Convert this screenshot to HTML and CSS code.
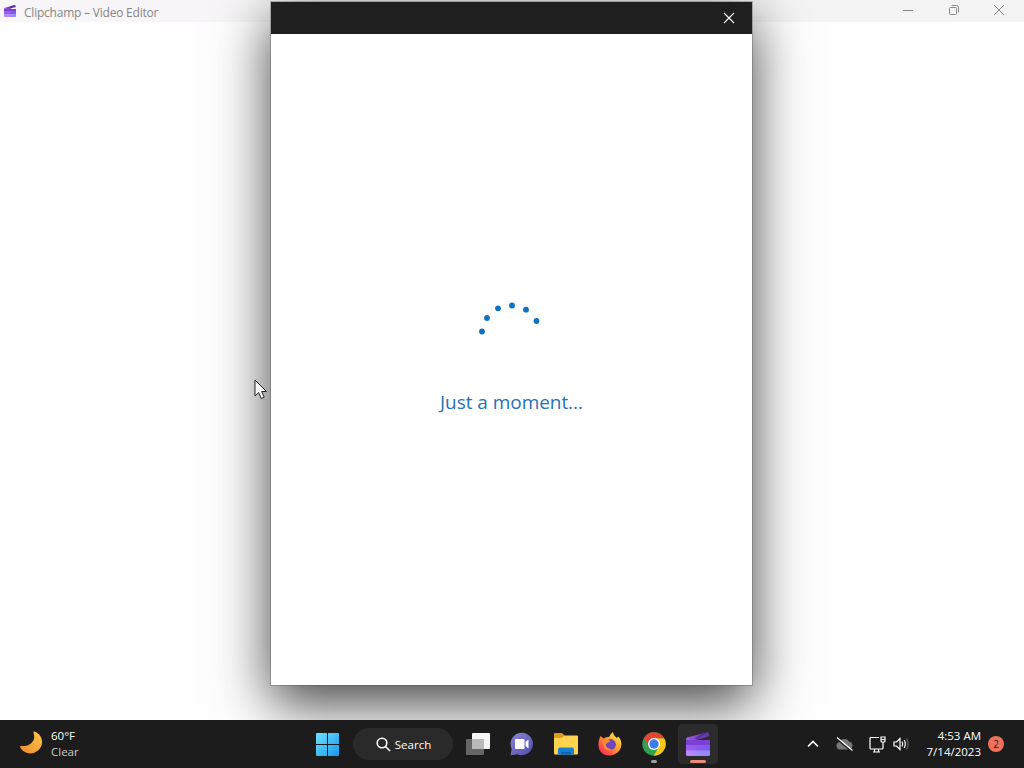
FILE: index.html
```html
<!DOCTYPE html>
<html lang="en">
<head>
    <meta charset="UTF-8">
    <meta name="viewport" content="width=device-width, initial-scale=1.0">
    <title>Clipchamp – Video Editor</title>
    <link rel="stylesheet" href="styles.css">
</head>
<body>
    <svg class="defs" width="0" height="0">
        <defs>
            <linearGradient id="clipTop" x1="0" y1="0" x2="1" y2="0">
                <stop offset="0" stop-color="#a45be6"/>
                <stop offset="1" stop-color="#5836a4"/>
            </linearGradient>
            <linearGradient id="clipMid" x1="0" y1="0" x2="1" y2="0">
                <stop offset="0" stop-color="#a35bef"/>
                <stop offset="1" stop-color="#7659ef"/>
            </linearGradient>
            <linearGradient id="clipLow" x1="0" y1="0" x2="1" y2="0">
                <stop offset="0" stop-color="#b98bfb"/>
                <stop offset="1" stop-color="#8f86fb"/>
            </linearGradient>
            <symbol id="clipchamp" viewBox="0 0 24 24">
                <path fill="url(#clipTop)" d="M0 7.500Q0 5.700 1.700 5.300L21.500 .2Q22.700 0 23 1.200L23.500 4 9 8.500H0z"/>
                <path fill="#4b2a94" d="M8 6.500L16 1.700 21 .4 12.500 7.200z" opacity=".7"/>
                <path fill="#7b3fd2" d="M0 8H24V13.500H0z"/>
                <path fill="url(#clipMid)" d="M0 13H24V19H0z"/>
                <path fill="url(#clipLow)" d="M0 18.500H24V22.500Q24 24 22.500 24H1.500Q0 24 0 22.500z"/>
            </symbol>
        </defs>
    </svg>

    <header class="titlebar">
        <svg class="app-icon" width="12" height="12"><use href="#clipchamp"/></svg>
        <span class="app-title">Clipchamp – Video Editor</span>
        <div class="window-buttons">
            <svg width="12" height="12" viewBox="0 0 12 12"><path d="M1 6.500H11"/></svg>
            <svg width="12" height="12" viewBox="0 0 12 12"><rect x="1.500" y="3.500" width="7" height="7" rx="1"/><path d="M3.500 1.500H8.500Q10.500 1.500 10.500 3.500V8.500"/></svg>
            <svg width="12" height="12" viewBox="0 0 12 12"><path d="M1 1L11 11M11 1L1 11"/></svg>
        </div>
    </header>

    <main class="workspace">
        <section class="dialog">
            <div class="dialog-bar">
                <svg width="12" height="12" viewBox="0 0 12 12"><path d="M1 1L11 11M11 1L1 11"/></svg>
            </div>
            <div class="dialog-body">
                <svg class="spinner" width="67" height="34" viewBox="0 0 67 34">
                    <circle cx="4" cy="30.500" r="2.900"/>
                    <circle cx="9" cy="17" r="2.900"/>
                    <circle cx="20" cy="7.300" r="2.900"/>
                    <circle cx="34" cy="4.500" r="2.900"/>
                    <circle cx="48" cy="8.700" r="2.900"/>
                    <circle cx="58.500" cy="20" r="2.900"/>
                </svg>
                <p class="message">Just a moment...</p>
            </div>
        </section>
        <svg class="cursor" width="14" height="21" viewBox="0 0 14 21">
            <path d="M1 1V17L4.700 13.500 7.300 19.500 10.200 18.200 7.600 12.500H12.500z"/>
        </svg>
    </main>

    <footer class="taskbar">
        <div class="weather">
            <svg width="24" height="24" viewBox="0 0 24 24">
                <defs>
                    <linearGradient id="moon" x1="1" y1="0" x2="0" y2="1">
                        <stop offset="0" stop-color="#ffc94d"/>
                        <stop offset="1" stop-color="#ef8a2b"/>
                    </linearGradient>
                </defs>
                <path fill="url(#moon)" d="M15.500.500C21 2.500 24.500 8.500 22.500 14.500 19 23.500 7 25.500 1.500 17 .5 15.500 1.500 14.800 3 15 11 15.500 17.500 9.500 14.500 2 14.300 1 14.700.2 15.500.500z"/>
            </svg>
            <div class="weather-text">
                <span>60°F</span>
                <span class="dim">Clear</span>
            </div>
        </div>

        <nav class="apps">
            <div class="app">
                <svg width="24" height="24" viewBox="0 0 24 24">
                    <defs>
                        <linearGradient id="win" x1="0" y1="0" x2="1" y2="1">
                            <stop offset="0" stop-color="#70e0ff"/>
                            <stop offset="1" stop-color="#1598ec"/>
                        </linearGradient>
                    </defs>
                    <path fill="url(#win)" d="M1 2Q1 1 2 1H12V12H1zM13 1H23Q24 1 24 2V12H13zM1 13H12V24H2Q1 24 1 23zM13 13H24V23Q24 24 23 24H13z"/>
                </svg>
            </div>
            <div class="search">
                <svg width="15" height="15" viewBox="0 0 15 15"><circle cx="6" cy="6" r="4.800"/><path d="M9.500 9.500L14 14"/></svg>
                <span>Search</span>
            </div>
            <!-- task view -->
            <div class="app">
                <svg width="24" height="24" viewBox="0 0 24 24">
                    <rect x="6" y="1" width="18" height="16" rx="1" fill="#f4f4f4"/>
                    <rect x="0" y="7" width="18" height="16" rx="1" fill="#666"/>
                    <path d="M6 7H18V17H6z" fill="#b9b9b9"/>
                </svg>
            </div>
            <!-- chat -->
            <div class="app">
                <svg width="24" height="24" viewBox="0 0 24 24">
                    <defs>
                        <linearGradient id="chat" x1="0" y1="0" x2="1" y2="1">
                            <stop offset="0" stop-color="#8b87d6"/>
                            <stop offset="1" stop-color="#4e4da8"/>
                        </linearGradient>
                    </defs>
                    <path fill="url(#chat)" d="M12 .7A11.300 11.300 0 1 1 7 22.300L1.500 23.300Q.4 23.400.7 22.300L1.700 17A11.300 11.300 0 0 1 12 .7z"/>
                    <rect x="5" y="7" width="9.500" height="10" rx="1" fill="#fff"/>
                    <path fill="#fff" d="M15.500 10L18.500 7.500V16.500L15.500 14z"/>
                </svg>
            </div>
            <!-- file explorer -->
            <div class="app">
                <svg width="26" height="24" viewBox="0 0 26 24">
                    <path fill="#dc9c1d" d="M1 2Q1 1 2 1H9L12 4V9H1z"/>
                    <path fill="#ffd34f" d="M1 6H8.500L11.500 3.500H24Q25 3.500 25 4.500V21.500Q25 22.500 24 22.500H2Q1 22.500 1 21.500z"/>
                    <path fill="#1681d2" d="M5 22.500V17.500Q5 15.500 7 15.500H19Q21 15.500 21 17.500V22.500z"/>
                    <path fill="#0c68b5" d="M8 20H18V22.500H8z"/>
                </svg>
            </div>
            <!-- firefox -->
            <div class="app">
                <svg width="24" height="24" viewBox="0 0 24 24">
                    <defs>
                        <linearGradient id="fox" x1="1" y1="0" x2="0" y2="1">
                            <stop offset=".1" stop-color="#ffec4b"/>
                            <stop offset=".45" stop-color="#ff9b2e"/>
                            <stop offset=".75" stop-color="#ff4b48"/>
                            <stop offset="1" stop-color="#e72871"/>
                        </linearGradient>
                    </defs>
                    <path fill="url(#fox)" d="M2.500 4L5.500 6.500Q8 4.500 11 5 12 2 15 0 15 3 19 6L20 4.500C23 7 24 11 23 15 20 25 6 26.500 1.500 18 -.5 13.500.5 8 2.500 4z"/>
                    <circle cx="12.500" cy="12.500" r="5.400" fill="#7045bd"/>
                    <path fill="#ff8b30" d="M4.500 7.500Q9 6 12.500 9L10 10.500Q8 11 7.500 13 9 17 14 17 9 20 6 16 4 12 4.500 7.500z"/>
                </svg>
            </div>
            <!-- chrome -->
            <div class="app running">
                <svg width="24" height="24" viewBox="0 0 24 24">
                    <circle cx="12" cy="12" r="11.700" fill="#2fa14f"/>
                    <path fill="#fbc716" d="M12 6.300H22.200A11.700 11.700 0 0 1 11.700 23.700L17 14.900z"/>
                    <path fill="#e64435" d="M1.900 6.100A11.700 11.700 0 0 1 22.200 6.300H12L7 14.900z"/>
                    <circle cx="12" cy="12" r="6" fill="#fff"/>
                    <circle cx="12" cy="12" r="4.700" fill="#3b7de9"/>
                </svg>
            </div>
            <div class="app active">
                <svg width="24" height="24"><use href="#clipchamp"/></svg>
            </div>
        </nav>

        <div class="tray">
            <svg class="chevron" width="12" height="8" viewBox="0 0 12 8"><path d="M1 6.500L6 1.500 11 6.500"/></svg>
            <svg class="cloud" width="18" height="16" viewBox="0 0 18 16">
                <path class="cloud-shape" d="M4 13.500A3.800 3.800 0 0 1 3.500 6 5.500 5.500 0 0 1 13 5.500 4.200 4.200 0 0 1 14 13.500z"/>
                <path class="gap-line" d="M1 3L15 15"/>
                <path d="M1 1.500L16.500 14.500"/>
            </svg>
            <svg class="network" width="17" height="17" viewBox="0 0 17 17">
                <path d="M10 1.500H2Q1 1.500 1 2.500V12Q1 13 2 13H13Q14 13 14 12V8M4 16H11M5.500 13V16M9.500 13V16M14 8V6M12 1H16V5Q16 6 15 6H13Q12 6 12 5zM12 3.500H16"/>
            </svg>
            <svg class="volume" width="17" height="14" viewBox="0 0 17 14">
                <path d="M1 5H3.500L7 1.500V12.500L3.500 9H1zM9 4.500Q10.500 7 9 9.500M11.200 3Q13.500 7 11.200 11"/>
                <path class="faint" d="M13.500 1.500Q17 7 13.500 12.500"/>
            </svg>
            <div class="clock">
                <span>4:53 AM</span>
                <span>7/14/2023</span>
            </div>
            <span class="badge">2</span>
        </div>
    </footer>
</body>
</html>
```
FILE: styles.css
```css
* {
    box-sizing: border-box;
}
body {
    margin: 0;
    height: 768px;
    width: 1024px;
    display: flex;
    flex-direction: column;
    overflow: hidden;
    background-color: #fefefe;
    font-family: 'Open Sans', 'Noto Sans', sans-serif;
}
svg {
    display: block;
    flex: none;
}
.defs {
    position: absolute;
}

/* app window */
.titlebar {
    height: 22px;
    flex: none;
    display: flex;
    align-items: center;
    padding: 0 19px 2px 4px;
    background: linear-gradient(90deg, #f8f6f8, #f3f3f3);
}
.app-icon {
    margin-top: 2px;
}
.app-title {
    margin: 4px 0 0 8px;
    font-size: 12px;
    letter-spacing: -0.22px;
    color: #868686;
}
.window-buttons {
    margin-left: auto;
    display: flex;
    gap: 33.500px;
}
.window-buttons svg {
    fill: none;
    stroke: #888;
}
.workspace {
    flex: 1;
}

/* sign-in dialog */
.dialog {
    position: absolute;
    left: 271px;
    top: 2px;
    width: 481px;
    height: 683px;
    display: flex;
    flex-direction: column;
    background-color: #fff;
    box-shadow: 0 0 0 1px rgba(80, 80, 80, 0.35), 0 18px 52px 0 rgba(0, 0, 0, 0.75);
}
.dialog-bar {
    height: 32px;
    padding: 0 17px 0 0;
    display: flex;
    align-items: center;
    justify-content: flex-end;
    background-color: #1f1f1f;
}
.dialog-bar svg {
    fill: none;
    stroke: #fff;
    stroke-width: 1.1;
}
.dialog-body {
    flex: 1;
    display: flex;
    flex-direction: column;
    align-items: center;
    padding-top: 267px;
}
.spinner {
    fill: #0f71c2;
}
.message {
    margin: 53px 0 0;
    font-size: 19px;
    line-height: 28px;
    letter-spacing: -0.05px;
    color: #2672b4;
    white-space: nowrap;
}
.cursor {
    position: absolute;
    left: 254px;
    top: 379px;
    fill: #fff;
    stroke: #222;
}

/* taskbar */
.taskbar {
    position: relative;
    height: 48px;
    flex: none;
    display: flex;
    align-items: center;
    background-color: #1c1c1c;
    color: #fff;
    font-size: 11.500px;
    line-height: 16px;
}
.weather {
    width: 307px;
    padding-left: 19px;
    display: flex;
    align-items: center;
    gap: 8px;
}
.weather svg {
    margin-top: -2px;
}
.weather-text {
    display: flex;
    flex-direction: column;
}
.dim {
    color: #ccc;
}
.apps {
    display: flex;
    align-items: center;
    gap: 4px;
}
.app {
    position: relative;
    width: 40px;
    height: 40px;
    display: flex;
    align-items: center;
    justify-content: center;
    border-radius: 4px;
}
.search {
    width: 100px;
    height: 32px;
    margin: 0 1px 0 2px;
    padding-left: 1px;
    display: flex;
    align-items: center;
    justify-content: center;
    gap: 4px;
    border-radius: 16px;
    background-color: #2a2a2a;
}
.search svg {
    margin-top: 1px;
    fill: none;
    stroke: #fff;
    stroke-width: 1.6;
}
.search span {
    margin-top: 1px;
}
.running::after,
.active::after {
    content: '';
    position: absolute;
    bottom: 1px;
    width: 6px;
    height: 3px;
    border-radius: 2px;
    background-color: #a0a0a0;
}
.active {
    background-color: #2b2b2c;
}
.active::after {
    width: 16px;
    background-color: #e98b79;
}
.tray {
    margin-left: auto;
    padding-right: 20px;
    display: flex;
    align-items: center;
}
.tray svg {
    fill: none;
    stroke: #fff;
    stroke-width: 1.2;
}
.tray .chevron {
    margin-right: -1px;
    stroke-width: 1.6;
}
.cloud {
    margin-left: 18px;
}
.tray .cloud-shape {
    fill: #777;
    stroke: none;
}
.tray .gap-line {
    stroke: #1c1c1c;
    stroke-width: 1.5;
}
.network {
    margin-left: 15px;
}
.volume {
    margin-left: 7px;
}
.tray .faint {
    stroke: #666;
}
.clock {
    width: 71px;
    display: flex;
    flex-direction: column;
    text-align: right;
}
.badge {
    width: 16px;
    height: 16px;
    margin-left: 7px;
    border-radius: 50%;
    background-color: #ee705b;
    color: #262020;
    font-size: 10px;
    text-align: center;
}
```
